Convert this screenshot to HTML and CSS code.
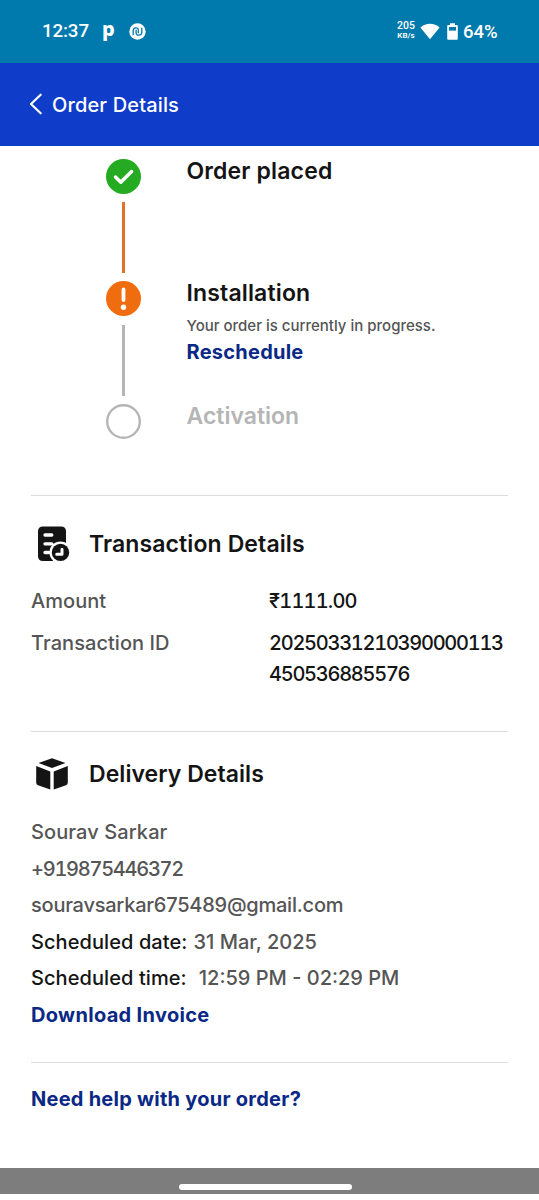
FILE: index.html
```html
<!DOCTYPE html>
<html lang="en">
<head>
<meta charset="utf-8">
<title>Order Details</title>
<link rel="stylesheet" href="styles.css">
</head>
<body>
<div class="status">
  <span class="clock">12:37</span>
  <span class="app-p">p</span>
  <svg class="app-n" viewBox="0 0 17 17"><circle cx="8.5" cy="8.5" r="8.2" fill="#fff"/><path d="M4.200 12.300V7.500C4.200 4.500 9.300 3.700 9.300 7v3.300M12.800 4.700v4.800C12.800 12.500 7.100 13.500 7.100 10V6.800" fill="none" stroke="#0079ad" stroke-width="1.300"/></svg>
  <div class="speed"><span class="rate">205</span><span class="unit">KB/s</span></div>
  <svg class="wifi" viewBox="0 0 20 17"><path d="M.4 4.400C5.800-.6 14.200-.6 19.600 4.400L10 16.200z" fill="#fff"/></svg>
  <svg class="battery" viewBox="0 0 11 17"><path d="M3 .3h5v1.700h1.800q1 0 1 1v12.700q0 1-1 1H1.200q-1 0-1-1V3q0-1 1-1H3z" fill="#fff"/><path d="M2 4h7v3.600H2z" fill="#0079ad"/></svg>
  <span class="percent">64%</span>
</div>
<header class="bar">
  <svg class="back" viewBox="0 0 14 22"><path d="M11.700 1.700L2 11l9.700 9.300" fill="none" stroke="#fff" stroke-width="2.200" stroke-linecap="round" stroke-linejoin="round"/></svg>
  <h1 class="bar-title">Order Details</h1>
</header>
<main class="content">
  <ol class="timeline">
    <li class="step">
      <div class="rail">
        <svg class="dot" viewBox="0 0 35 35"><circle cx="17.500" cy="17.500" r="17.500" fill="#25ab21"/><path d="M9.500 18l5.300 5.200L25.600 12.500" fill="none" stroke="#fff" stroke-width="3.500" stroke-linecap="round" stroke-linejoin="round"/></svg>
        <span class="line line-active"></span>
      </div>
      <div class="step-text"><h2 class="step-title">Order placed</h2></div>
    </li>
    <li class="step">
      <div class="rail">
        <svg class="dot" viewBox="0 0 35 35"><circle cx="17.500" cy="17.500" r="17.500" fill="#f06d0f"/><path d="M17.500 8.500v10.500" stroke="#fff" stroke-width="3.800" stroke-linecap="round"/><circle cx="17.500" cy="26.300" r="2.700" fill="#fff"/></svg>
        <span class="line"></span>
      </div>
      <div class="step-text">
        <h2 class="step-title">Installation</h2>
        <p class="note">Your order is currently in progress.</p>
        <a class="link reschedule">Reschedule</a>
      </div>
    </li>
    <li class="step">
      <div class="rail"><svg class="dot" viewBox="0 0 35 35"><circle cx="17.500" cy="17.500" r="16.300" fill="#fff" stroke="#b5b5b5" stroke-width="2.400"/></svg></div>
      <div class="step-text"><h2 class="step-title pending">Activation</h2></div>
    </li>
  </ol>
  <section class="section transaction">
    <div class="section-head">
      <svg class="icon" viewBox="0 0 42 42"><path d="M12 3.500h18q5 0 5 5v16.500l-9 13h-14q-5 0-5-5V8.500q0-5 5-5z" fill="#141414"/><path d="M14 12h6.800M14 20.800h6.800M14 29.500h4" stroke="#fff" stroke-width="3.300" stroke-linecap="round"/><circle cx="29.500" cy="29.400" r="11" fill="#fff"/><circle cx="29.500" cy="29.400" r="8.700" fill="#141414"/><path d="M31 26.200v5.100h-5.300" fill="none" stroke="#fff" stroke-width="3" stroke-linecap="round" stroke-linejoin="round"/></svg>
      <h2 class="section-title">Transaction Details</h2>
    </div>
    <dl class="facts">
      <dt>Amount</dt><dd class="amount">₹1111.00</dd>
      <dt>Transaction ID</dt><dd class="digits">20250331210390000113<br>450536885576</dd>
    </dl>
  </section>
  <section class="section delivery">
    <div class="section-head">
      <svg class="icon" viewBox="0 0 42 42"><path d="M21 5.300L34.500 10 21 15 7.500 10zM5.200 13L19.300 18.400V36.500L7 32.200Q5.200 31.500 5.200 29.700zM36.800 13L22.700 18.400V36.500L35 32.200Q36.800 31.500 36.800 29.700z" fill="#141414"/></svg>
      <h2 class="section-title delivery-title">Delivery Details</h2>
    </div>
    <div class="lines">
      <p class="name">Sourav Sarkar</p>
      <p class="digits">+919875446372</p>
      <p class="email">souravsarkar675489@gmail.com</p>
      <p><span class="label">Scheduled date:</span><span class="date-value">31 Mar, 2025</span></p>
      <p><span class="label">Scheduled time:</span><span class="time-value">12:59 PM - 02:29 PM</span></p>
      <p><a class="link download">Download Invoice</a></p>
    </div>
  </section>
  <section class="section help"><a class="link">Need help with your order?</a></section>
</main>
<footer class="nav"><span class="pill"></span></footer>
</body>
</html>
```
FILE: styles.css
```css
* { box-sizing: border-box; margin: 0; padding: 0; }
body { width: 539px; height: 1200px; display: flex; flex-direction: column; overflow: hidden; background: #fff; color: #141414; font: 500 20px/36.5px Inter, "Noto Sans", sans-serif; white-space: nowrap; }
svg { display: block; flex: none; }
ol { list-style: none; }

.status { height: 62.600px; flex: none; display: flex; align-items: center; padding-left: 42px; background: #0079ad; color: #fff; font-family: Roboto, sans-serif; line-height: 24px; }
.clock { width: 60px; font-size: 18.800px; font-weight: 500; letter-spacing: -.15px; }
.app-p { width: 27px; font: 800 20px/20px "Noto Sans", sans-serif; margin-top: -5px; }
.app-n { width: 17px; height: 17px; }
.speed { margin-left: 250px; width: 20px; display: flex; flex-direction: column; align-items: center; line-height: 10px; }
.rate { font-size: 10.500px; font-weight: 500; }
.unit { font-size: 8px; font-weight: 600; }
.wifi { width: 20px; height: 17px; margin-left: 4px; }
.battery { width: 11px; height: 17px; margin-left: 7px; }
.percent { margin-left: 5px; font-size: 18.500px; font-weight: 500; padding-top: 1px; }

.bar { height: 83.400px; flex: none; display: flex; align-items: center; padding-left: 29px; background: #0f3cc9; color: #fff; }
.back { width: 14px; height: 22px; }
.bar-title { margin-left: 9px; padding-top: 1px; font-size: 20px; font-weight: 500; letter-spacing: .14px; }

.content { flex: none; height: 1022.500px; padding: 13px 31px 0; }
.timeline { height: 336.200px; padding-left: 75px; }
.step { display: flex; height: 122.500px; }
.rail { width: 35px; display: flex; flex-direction: column; align-items: center; }
.dot { width: 35px; height: 35px; }
.line { width: 3px; height: 71px; margin-top: 8.500px; background: #b5b5b5; }
.line-active { background: #e07228; }
.step-text { margin-left: 45.500px; }
.step-title { font-size: 23px; line-height: 25px; font-weight: 600; letter-spacing: .15px; }
.pending { color: #b5b5b5; letter-spacing: 0; }
.note { font-size: 15px; line-height: 22px; margin-top: 8.500px; color: #555; }
.link { color: #0a2885; font-weight: 700; letter-spacing: .25px; }
.reschedule { display: block; line-height: 30px; }

.section { border-top: 1px solid #dcdcdc; }
.section-head { display: flex; align-items: center; }
.icon { width: 42px; height: 42px; }
.section-title { margin-left: 16px; font-size: 23px; font-weight: 600; line-height: 30px; letter-spacing: .11px; }
.delivery-title { letter-spacing: .05px; }
.transaction { height: 236.300px; padding-top: 26.500px; }
.facts { display: grid; grid-template-columns: 238px 1fr; row-gap: 10.500px; margin-top: 21.300px; line-height: 31.500px; }
dt { color: #555; letter-spacing: .05px; }
.digits, .amount { font-variant-numeric: tabular-nums; letter-spacing: -1.270px; }
.amount { letter-spacing: -.8px; }
.delivery { height: 330.300px; padding-top: 21px; }
.lines { margin-top: 19px; color: #555; }
.name { letter-spacing: .1px; }
.email { letter-spacing: -.23px; }
.label { color: #141414; letter-spacing: .08px; }
.date-value { margin-left: 6px; }
.time-value { margin-left: 12px; }
.download { letter-spacing: .320px; }
.help { padding-top: 18.400px; }

.nav { height: 25.500px; flex: none; display: flex; justify-content: center; align-items: flex-start; padding: 16px 9px 0 0; background: #7d7d7d; }
.pill { width: 173px; height: 5.500px; border-radius: 3px; background: #fff; }
```
